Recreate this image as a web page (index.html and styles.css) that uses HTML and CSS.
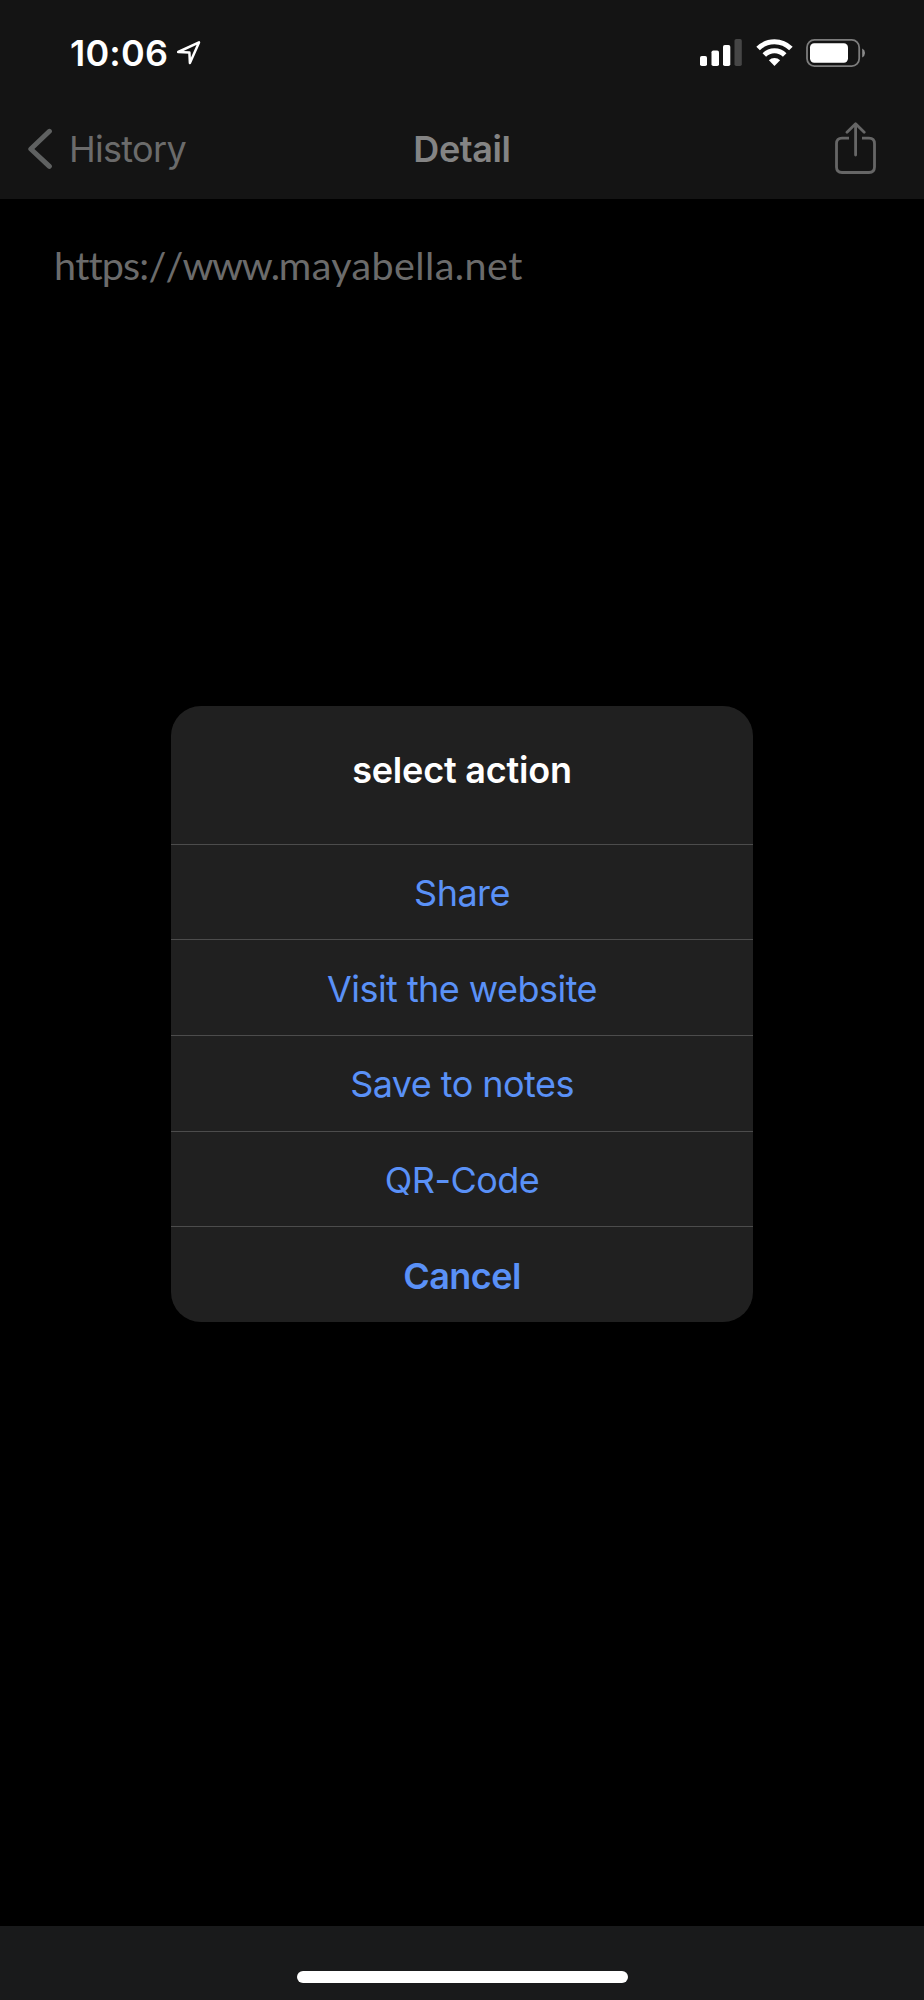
FILE: index.html
```
<!DOCTYPE html>
<html lang="en">
<head>
    <meta charset="UTF-8">
    <meta name="viewport" content="width=device-width, initial-scale=1.0">
    <title>Detail</title>
    <link rel="stylesheet" href="styles.css">
</head>
<body>
    <div class="screen">
        <header class="header">
            <div class="status-bar">
                <div class="status-left">
                    <span class="time">10:06</span>
                    <svg class="location-icon" width="26" height="26" viewBox="0 0 26 26">
                        <path d="M2.2 12 L23 2.4 L13.9 23 L13.4 12.6 Z" fill="none" stroke="#fff" stroke-width="2.5" stroke-linejoin="round"/>
                    </svg>
                </div>
                <div class="status-right">
                    <svg width="42" height="28" viewBox="0 0 42 28">
                        <rect x="0" y="17" width="7" height="10" rx="1.8" fill="#fff"/>
                        <rect x="11.5" y="11.5" width="7.5" height="15.5" rx="1.8" fill="#fff"/>
                        <rect x="23" y="6" width="7.3" height="21" rx="1.8" fill="#fff"/>
                        <rect x="34.5" y="0" width="7.3" height="27" rx="1.8" fill="#464646"/>
                    </svg>
                    <svg class="wifi-icon" width="37" height="28" viewBox="0 0 37 28">
                        <g fill="none" stroke="#fff" stroke-width="5">
                            <path d="M2.1 9.6 A23.2 23.2 0 0 1 34.9 9.6"/>
                            <path d="M8.3 16 A14.4 14.4 0 0 1 28.7 16"/>
                        </g>
                        <path d="M18.5 27 L12.9 21.3 A8 8 0 0 1 24.1 21.3 Z" fill="#fff"/>
                    </svg>
                    <svg width="60" height="28" viewBox="0 0 60 28">
                        <rect x="1" y="0.9" width="52.2" height="26.2" rx="7.5" fill="none" stroke="#7c7c7c" stroke-width="1.8"/>
                        <rect x="4" y="4.2" width="38" height="19.6" rx="4.2" fill="#fff"/>
                        <path d="M56.2 9.6 Q59 11 59 14 Q59 17 56.2 18.6 Z" fill="#8a8a8a"/>
                    </svg>
                </div>
            </div>
            <nav class="nav-bar">
                <a href="#" class="back-link">
                    <svg width="26" height="42" viewBox="0 0 26 42">
                        <path d="M22.4 3.3 L3.8 21 L22.4 38.4" fill="none" stroke="#5f6161" stroke-width="5" stroke-linecap="round" stroke-linejoin="round"/>
                    </svg>
                    <span class="back-text">History</span>
                </a>
                <h1 class="nav-title">Detail</h1>
                <a href="#" class="share-link" aria-label="Share">
                    <svg width="42" height="53" viewBox="0 0 42 53">
                        <g fill="none" stroke="#666" stroke-width="2.8">
                            <path d="M14 16.2 H7 Q1.5 16.2 1.5 21.7 V45 Q1.5 50.5 7 50.5 H34 Q39.5 50.5 39.5 45 V21.7 Q39.5 16.2 34 16.2 H27"/>
                            <path d="M20.6 2 V33 M12 10.3 L20.6 1.7 L29.2 10.3" stroke-linecap="round" stroke-linejoin="round"/>
                        </g>
                    </svg>
                </a>
            </nav>
        </header>

        <main class="content">
            <p class="url"><span class="scheme">https://</span><span class="www">www.</span>mayabella.net</p>
        </main>

        <footer class="bottom-bar">
            <div class="home-indicator"></div>
        </footer>

        <div class="overlay">
            <div class="alert" role="dialog">
                <h2 class="alert-title">select action</h2>
                <button type="button" class="alert-btn">Share</button>
                <button type="button" class="alert-btn">Visit the website</button>
                <button type="button" class="alert-btn">Save to notes</button>
                <button type="button" class="alert-btn">QR-Code</button>
                <button type="button" class="alert-btn cancel">Cancel</button>
            </div>
        </div>
    </div>
</body>
</html>
```

FILE: styles.css
```
* {
    margin: 0;
    padding: 0;
    box-sizing: border-box;
}

body {
    font-family: Inter, 'Liberation Sans', sans-serif;
    background: #000;
    color: #fff;
}

svg {
    display: block;
    flex: none;
}

.screen {
    position: relative;
    display: flex;
    flex-direction: column;
    height: 2000px;
}

.header {
    height: 199px;
    background: #141414;
}

.status-bar {
    display: flex;
    justify-content: space-between;
    height: 99px;
    padding: 0 58px 0 70px;
}

.status-left {
    display: flex;
    align-items: center;
    height: 105px;
}

.time {
    font-size: 36px;
    font-weight: 600;
    letter-spacing: 0.2px;
}

.location-icon {
    margin-left: 8px;
}

.status-right {
    display: flex;
    padding-top: 38.5px;
}

.wifi-icon {
    margin: 0 13px 0 14px;
}

.nav-bar {
    display: grid;
    grid-template-columns: 1fr auto 1fr;
    align-items: center;
    height: 99px;
    padding: 0 47px 0 27px;
}

.back-link {
    display: flex;
    align-items: center;
    color: #6b6b6b;
    text-decoration: none;
}

.back-text {
    margin-left: 16px;
    font-size: 36px;
    letter-spacing: -0.7px;
}

.nav-title {
    margin-left: 20px;
    font-size: 36px;
    font-weight: 600;
    color: #848484;
    letter-spacing: -0.4px;
}

.share-link {
    justify-self: end;
}

.content {
    flex: 1;
    padding: 42px 54px;
}

.url {
    font-family: Lato, 'Open Sans', sans-serif;
    font-size: 39.5px;
    line-height: 48px;
    letter-spacing: 0.4px;
    color: #6b6b6b;
    font-variant-ligatures: none;
}

.scheme {
    font-kerning: none;
    letter-spacing: -0.85px;
}

.www {
    letter-spacing: -1.3px;
}

.bottom-bar {
    display: flex;
    justify-content: center;
    height: 74px;
    padding-top: 45px;
    background: #191a1b;
}

.home-indicator {
    width: 331px;
    height: 12px;
    border-radius: 6px;
    background: #fff;
}

.overlay {
    position: absolute;
    inset: 0;
    display: flex;
    justify-content: center;
    padding-top: 705.5px;
}

.alert {
    display: flex;
    flex-direction: column;
    width: 582px;
    height: 616.5px;
    border-radius: 30px;
    background: #202020;
    overflow: hidden;
}

.alert-title {
    height: 138px;
    padding-top: 42px;
    font-size: 36px;
    line-height: 44px;
    font-weight: 600;
    letter-spacing: -0.2px;
    text-align: center;
}

.alert-btn {
    flex: 1;
    padding-top: 2px;
    border: none;
    border-top: 1.5px solid #4c4c4c;
    background: none;
    font-family: inherit;
    font-size: 36px;
    letter-spacing: -0.55px;
    color: #5a91f7;
    cursor: pointer;
}

.cancel {
    font-weight: 600;
}
```
